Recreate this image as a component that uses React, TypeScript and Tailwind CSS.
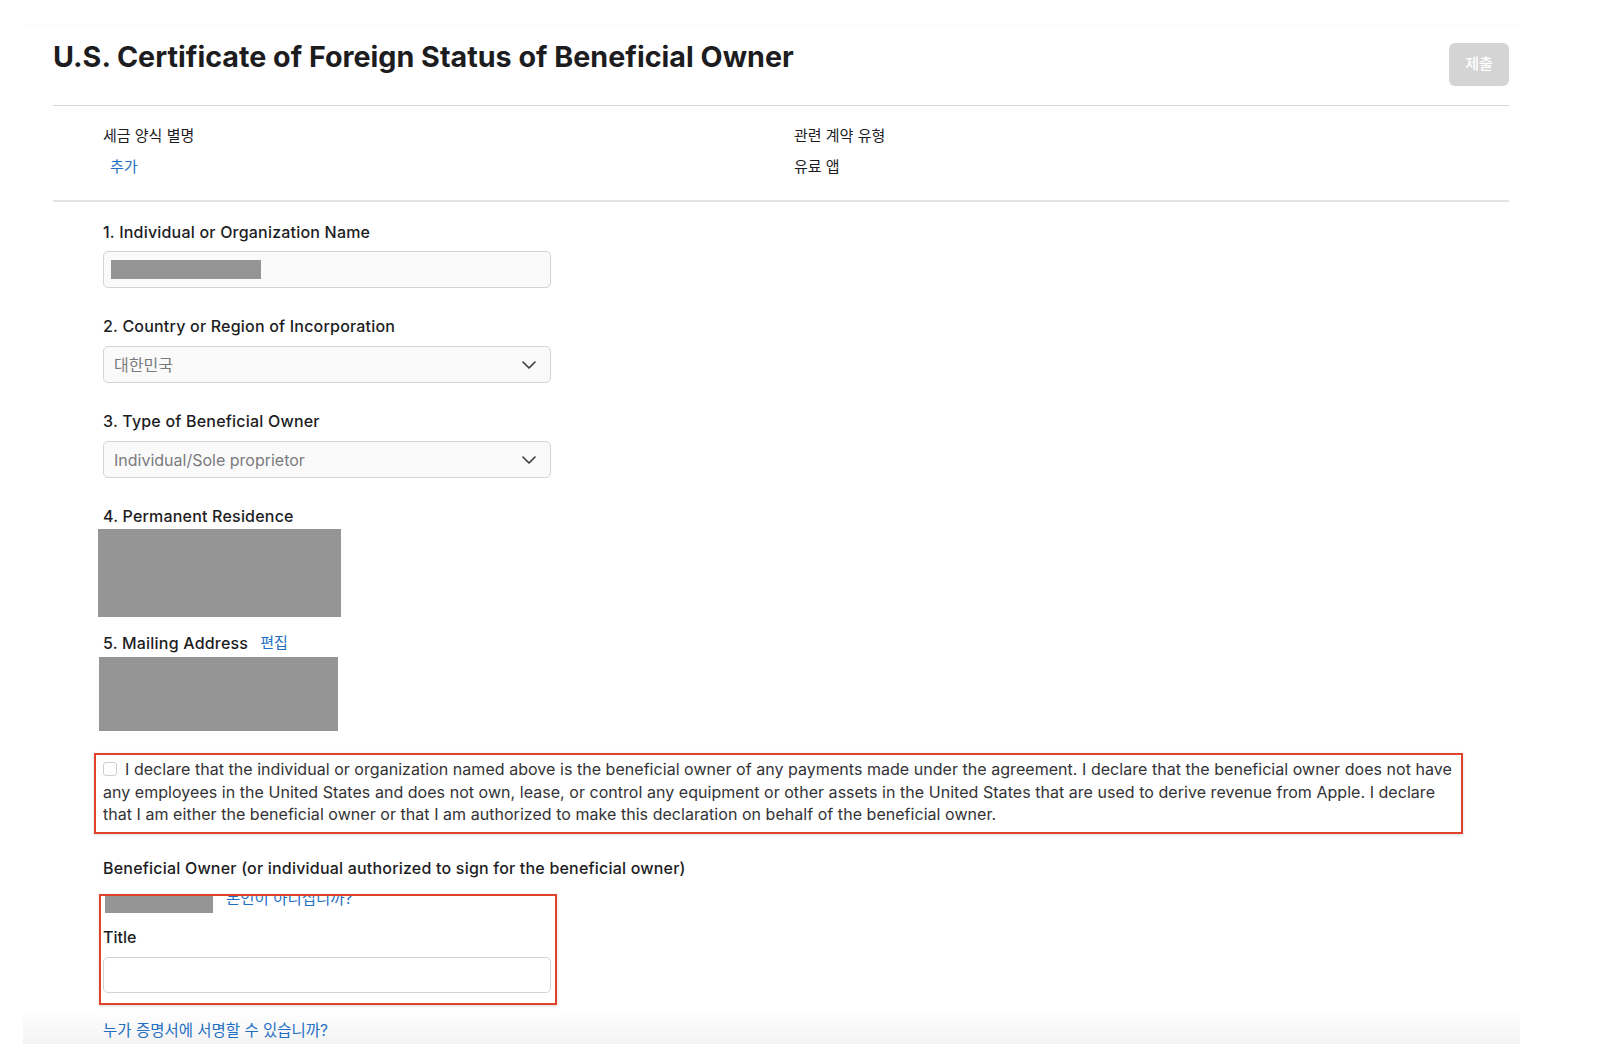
import React from "react";

const font = "font-['Inter','Noto_Sans_CJK_KR',sans-serif]";

function Chevron() {
  return (
    <svg width="14" height="8" viewBox="0 0 14 8" fill="none" className="shrink-0">
      <path d="M1 1l6 6 6-6" stroke="#3a3a3c" strokeWidth="1.6" strokeLinecap="round" strokeLinejoin="round" />
    </svg>
  );
}

function Label({ children }: { children: React.ReactNode }) {
  return (
    <div className="h-5 text-[16px] leading-5 font-medium tracking-[0.2px] whitespace-nowrap text-[#1d1d1f]">
      {children}
    </div>
  );
}

function Select({ value }: { value: string }) {
  return (
    <div className="mt-[10px] flex h-[37px] w-[448px] items-center justify-between rounded-[5px] border border-[#d2d2d7] bg-[#fafafa] pl-[10px] pr-[14px]">
      <span className="text-[16px] text-[#7a7a7e]">{value}</span>
      <Chevron />
    </div>
  );
}

export default function App() {
  return (
    <div className={`relative h-[1054px] w-[1602px] overflow-hidden bg-white ${font}`}>
      <div className="ml-[23px] mt-[25px] h-[1019px] w-[1497px] border-t border-[#f9f9f9] bg-[linear-gradient(to_bottom,#ffffff_calc(100%-34px),#f3f3f3)]">
        <div className="ml-[30px] w-[1456px]">
          {/* header */}
          <div className="flex h-[79px] items-start justify-between">
            <h1 className="pt-[15px] text-[28.7px] leading-8 font-bold text-[#1d1d1f]">
              U.S. Certificate of Foreign Status of Beneficial Owner
            </h1>
            <button className="mt-[17px] h-[43px] w-[60px] rounded-[6px] bg-[#d4d4d4] text-[15px] font-medium text-white">
              제출
            </button>
          </div>
          <div className="h-px bg-[#d6d6d6]" />

          {/* info */}
          <div className="grid grid-cols-[691px_1fr] pl-[50px] pt-[20px] pb-[23px] text-[15px] leading-5 text-[#1d1d1f]">
            <div>
              <div>세금 양식 별명</div>
              <div className="mt-[11px] pl-[7px] text-[#1f6fc5]">추가</div>
            </div>
            <div>
              <div>관련 계약 유형</div>
              <div className="mt-[11px]">유료 앱</div>
            </div>
          </div>
          <div className="h-[2px] bg-[#e4e4e4]" />

          {/* form */}
          <div className="pl-[50px] pt-[20px]">
            <Label>1. Individual or Organization Name</Label>
            <div className="mt-[9px] flex h-[37px] w-[448px] items-center rounded-[5px] border border-[#d2d2d7] bg-[#fafafa] pl-[7px]">
              <div className="h-[19px] w-[150px] bg-[#959595]" />
            </div>

            <div className="mt-[28px]">
              <Label>2. Country or Region of Incorporation</Label>
            </div>
            <Select value="대한민국" />

            <div className="mt-[28px]">
              <Label>3. Type of Beneficial Owner</Label>
            </div>
            <Select value="Individual/Sole proprietor" />

            <div className="mt-[28px]">
              <Label>4. Permanent Residence</Label>
            </div>
            <div className="mt-[3px] -ml-[5px] h-[88px] w-[243px] bg-[#959595]" />

            <div className="mt-[16px] flex items-center gap-[12px]">
              <Label>5. Mailing Address</Label>
              <span className="text-[15px] leading-5 text-[#1f6fc5]">편집</span>
            </div>
            <div className="mt-[4px] -ml-[4px] h-[74px] w-[239px] bg-[#959595]" />

            {/* declaration */}
            <div className="mt-[22px] -ml-[9px] h-[81px] w-[1369px] border-2 border-[#e0432c] pl-[7px] pt-[3px] text-[16px] leading-[22.5px] tracking-[0.04px] whitespace-nowrap text-[#333336] shadow-[0_1px_3px_rgba(0,0,0,0.15)]">
              <div className="flex items-center">
                <span className="mr-[8px] inline-block h-[14px] w-[14px] rounded-[3px] border border-[#cfcfcf] bg-white" />
                I declare that the individual or organization named above is the beneficial owner of any payments made under the agreement. I declare that the beneficial owner does not have
              </div>
              <div>
                any employees in the United States and does not own, lease, or control any equipment or other assets in the United States that are used to derive revenue from Apple. I declare
              </div>
              <div>that I am either the beneficial owner or that I am authorized to make this declaration on behalf of the beneficial owner.</div>
            </div>

            <div className="mt-[24px]">
              <Label>Beneficial Owner (or individual authorized to sign for the beneficial owner)</Label>
            </div>

            {/* signer box */}
            <div className="mt-[16px] -ml-[4px] h-[111px] w-[458px] overflow-hidden border-2 border-[#e0432c] shadow-[0_1px_3px_rgba(0,0,0,0.15)]">
              <div className="flex items-start">
                <div className="ml-[4px] h-[17px] w-[108px] bg-[#959595]" />
                <span className="-mt-[7px] ml-[13px] text-[15.5px] leading-5 text-[#1f6fc5]">본인이 아니십니까?</span>
              </div>
              <div className="mt-[14px] pl-[2px] text-[16px] leading-5 font-medium text-[#1d1d1f]">Title</div>
              <div className="mt-[10px] ml-[2px] h-[36px] w-[448px] rounded-[5px] border border-[#d2d2d7] bg-white" />
            </div>

            <div className="mt-[16px] text-[15.5px] leading-5 text-[#1f6fc5]">누가 증명서에 서명할 수 있습니까?</div>
          </div>
        </div>
      </div>
    </div>
  );
}
